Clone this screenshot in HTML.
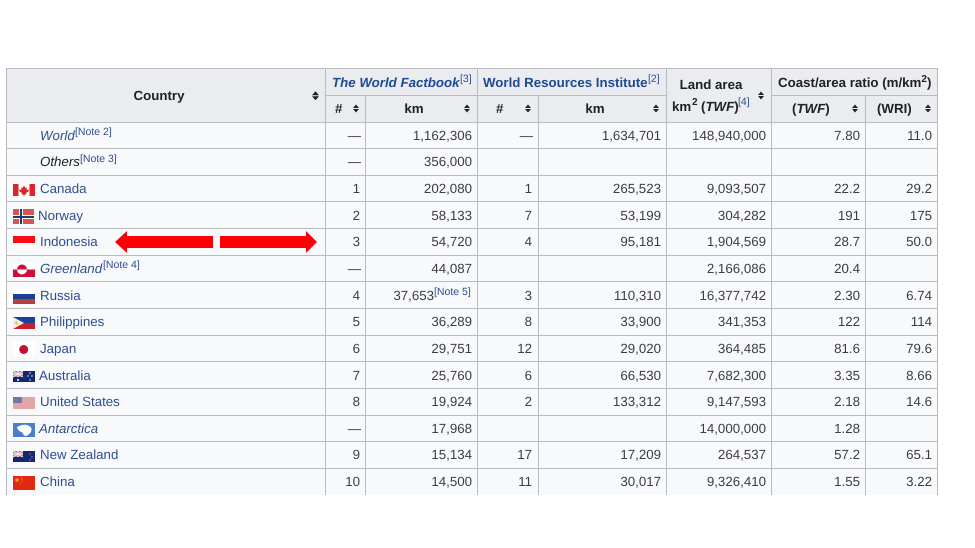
<!DOCTYPE html>
<html><head><meta charset="utf-8"><style>
html,body{margin:0;padding:0;background:#fff;width:975px;height:548px;overflow:hidden}
svg{display:block;font-family:"Liberation Sans",Arial,sans-serif;font-size:13.3px;text-rendering:geometricPrecision}
.txt{filter:blur(.25px)}
.n{fill:#3c3d3f;text-anchor:end}
.l{fill:#2f4f8f}
.h{fill:#202122;font-weight:bold}
.s{fill:#2f4f8f;font-size:10.5px}
.e{fill:#202122;font-style:italic}
.c{text-anchor:middle}
.g line{stroke:#b9bbbf;stroke-width:1;shape-rendering:crispEdges}
</style></head><body>
<svg width="975" height="548" viewBox="0 0 975 548" xmlns="http://www.w3.org/2000/svg">
<rect x="6" y="69" width="931" height="426" fill="#f8f9fa"/>
<rect x="6" y="69" width="931" height="53" fill="#eaecf0"/>
<g class="g">
<line x1="6" y1="68.5" x2="938" y2="68.5"/>
<line x1="325" y1="95.5" x2="666" y2="95.5"/>
<line x1="771" y1="95.5" x2="938" y2="95.5"/>
<line x1="6" y1="122.5" x2="938" y2="122.5"/>
<line x1="6" y1="148.5" x2="938" y2="148.5"/>
<line x1="6" y1="175.5" x2="938" y2="175.5"/>
<line x1="6" y1="201.5" x2="938" y2="201.5"/>
<line x1="6" y1="228.5" x2="938" y2="228.5"/>
<line x1="6" y1="255.5" x2="938" y2="255.5"/>
<line x1="6" y1="281.5" x2="938" y2="281.5"/>
<line x1="6" y1="308.5" x2="938" y2="308.5"/>
<line x1="6" y1="335.5" x2="938" y2="335.5"/>
<line x1="6" y1="361.5" x2="938" y2="361.5"/>
<line x1="6" y1="388.5" x2="938" y2="388.5"/>
<line x1="6" y1="415.5" x2="938" y2="415.5"/>
<line x1="6" y1="441.5" x2="938" y2="441.5"/>
<line x1="6" y1="468.5" x2="938" y2="468.5"/>
<line x1="6.5" y1="68" x2="6.5" y2="495"/>
<line x1="325.5" y1="68" x2="325.5" y2="495"/>
<line x1="365.5" y1="96" x2="365.5" y2="495"/>
<line x1="477.5" y1="68" x2="477.5" y2="495"/>
<line x1="538.5" y1="96" x2="538.5" y2="495"/>
<line x1="666.5" y1="68" x2="666.5" y2="495"/>
<line x1="771.5" y1="68" x2="771.5" y2="495"/>
<line x1="865.5" y1="96" x2="865.5" y2="495"/>
<line x1="937.5" y1="68" x2="937.5" y2="495"/>
</g>

<g class="txt">
<!-- header -->
<text class="h c" x="159" y="100">Country</text>
<text x="332" y="87" style="font-weight:bold;font-style:italic;fill:#1f4a94">The World Factbook</text><text class="s" x="460" y="82">[3]</text>
<text x="483" y="87" style="font-weight:bold;fill:#1f4a94">World Resources Institute</text><text class="s" x="648" y="82">[2]</text>
<text class="h c" x="711" y="89">Land area</text>
<text class="h" x="672" y="111">km</text><text class="h" x="692" y="105" style="font-size:10px">2</text><text class="h" x="701" y="111">(<tspan font-style="italic">TWF</tspan>)</text><text class="s" x="738" y="105">[4]</text>
<text class="h" x="778" y="87">Coast/area ratio (m/km<tspan dy="-5" font-size="10">2</tspan><tspan dy="5">)</tspan></text>
<text class="h" x="335" y="113">#</text>
<text class="h c" x="414" y="113">km</text>
<text class="h" x="496" y="113">#</text>
<text class="h c" x="595" y="113">km</text>
<text class="h" x="792" y="113">(<tspan font-style="italic">TWF</tspan>)</text>
<text class="h" x="877" y="113">(WRI)</text>

<!-- country names -->
<text x="40" y="140" class="l" font-style="italic">World</text><text class="s" x="75" y="135">[Note 2]</text>
<text x="40" y="166" class="e">Others</text><text class="s" x="80" y="162">[Note 3]</text>
<text x="40" y="193" class="l">Canada</text>
<text x="38" y="220" class="l">Norway</text>
<text x="40" y="246" class="l">Indonesia</text>
<text x="40" y="273" class="l" font-style="italic">Greenland</text><text class="s" x="103" y="268">[Note 4]</text>
<text x="40" y="300" class="l">Russia</text>
<text x="40" y="326" class="l">Philippines</text>
<text x="40" y="353" class="l">Japan</text>
<text x="39" y="380" class="l">Australia</text>
<text x="40" y="406" class="l">United States</text>
<text x="39" y="433" class="l" font-style="italic">Antarctica</text>
<text x="40" y="459" class="l">New Zealand</text>
<text x="40" y="486" class="l">China</text>

<!-- # WF -->
<text class="n" x="361" y="140">—</text>
<text class="n" x="361" y="166">—</text>
<text class="n" x="360" y="193">1</text>
<text class="n" x="360" y="220">2</text>
<text class="n" x="360" y="246">3</text>
<text class="n" x="361" y="273">—</text>
<text class="n" x="360" y="300">4</text>
<text class="n" x="360" y="326">5</text>
<text class="n" x="360" y="353">6</text>
<text class="n" x="360" y="380">7</text>
<text class="n" x="360" y="406">8</text>
<text class="n" x="361" y="433">—</text>
<text class="n" x="360" y="459">9</text>
<text class="n" x="360" y="486">10</text>
<!-- km WF -->
<text class="n" x="472" y="140">1,162,306</text>
<text class="n" x="472" y="166">356,000</text>
<text class="n" x="472" y="193">202,080</text>
<text class="n" x="472" y="220">58,133</text>
<text class="n" x="472" y="246">54,720</text>
<text class="n" x="472" y="273">44,087</text>
<text class="n" x="434" y="300">37,653</text><text class="s" x="434" y="295">[Note 5]</text>
<text class="n" x="472" y="326">36,289</text>
<text class="n" x="472" y="353">29,751</text>
<text class="n" x="472" y="380">25,760</text>
<text class="n" x="472" y="406">19,924</text>
<text class="n" x="472" y="433">17,968</text>
<text class="n" x="472" y="459">15,134</text>
<text class="n" x="472" y="486">14,500</text>
<!-- # WRI -->
<text class="n" x="533" y="140">—</text>
<text class="n" x="532" y="193">1</text>
<text class="n" x="532" y="220">7</text>
<text class="n" x="532" y="246">4</text>
<text class="n" x="532" y="300">3</text>
<text class="n" x="532" y="326">8</text>
<text class="n" x="532" y="353">12</text>
<text class="n" x="532" y="380">6</text>
<text class="n" x="532" y="406">2</text>
<text class="n" x="532" y="459">17</text>
<text class="n" x="532" y="486">11</text>
<!-- km WRI -->
<text class="n" x="661" y="140">1,634,701</text>
<text class="n" x="661" y="193">265,523</text>
<text class="n" x="661" y="220">53,199</text>
<text class="n" x="661" y="246">95,181</text>
<text class="n" x="661" y="300">110,310</text>
<text class="n" x="661" y="326">33,900</text>
<text class="n" x="661" y="353">29,020</text>
<text class="n" x="661" y="380">66,530</text>
<text class="n" x="661" y="406">133,312</text>
<text class="n" x="661" y="459">17,209</text>
<text class="n" x="661" y="486">30,017</text>
<!-- land -->
<text class="n" x="766" y="140">148,940,000</text>
<text class="n" x="766" y="193">9,093,507</text>
<text class="n" x="766" y="220">304,282</text>
<text class="n" x="766" y="246">1,904,569</text>
<text class="n" x="766" y="273">2,166,086</text>
<text class="n" x="766" y="300">16,377,742</text>
<text class="n" x="766" y="326">341,353</text>
<text class="n" x="766" y="353">364,485</text>
<text class="n" x="766" y="380">7,682,300</text>
<text class="n" x="766" y="406">9,147,593</text>
<text class="n" x="766" y="433">14,000,000</text>
<text class="n" x="766" y="459">264,537</text>
<text class="n" x="766" y="486">9,326,410</text>
<!-- TWF -->
<text class="n" x="860" y="140">7.80</text>
<text class="n" x="860" y="193">22.2</text>
<text class="n" x="860" y="220">191</text>
<text class="n" x="860" y="246">28.7</text>
<text class="n" x="860" y="273">20.4</text>
<text class="n" x="860" y="300">2.30</text>
<text class="n" x="860" y="326">122</text>
<text class="n" x="860" y="353">81.6</text>
<text class="n" x="860" y="380">3.35</text>
<text class="n" x="860" y="406">2.18</text>
<text class="n" x="860" y="433">1.28</text>
<text class="n" x="860" y="459">57.2</text>
<text class="n" x="860" y="486">1.55</text>
<!-- WRI -->
<text class="n" x="932" y="140">11.0</text>
<text class="n" x="932" y="193">29.2</text>
<text class="n" x="932" y="220">175</text>
<text class="n" x="932" y="246">50.0</text>
<text class="n" x="932" y="300">6.74</text>
<text class="n" x="932" y="326">114</text>
<text class="n" x="932" y="353">79.6</text>
<text class="n" x="932" y="380">8.66</text>
<text class="n" x="932" y="406">14.6</text>
<text class="n" x="932" y="459">65.1</text>
<text class="n" x="932" y="486">3.22</text>
</g>

<!-- sort arrows -->
<g fill="#202122">
<path d="M312 95.3l3.5-4 3.5 4zM312 96.3l3.5 4 3.5-4z"/>
<path d="M353 108l3-3.500 3 3.500zM353 109l3 3.500 3-3.500z"/>
<path d="M464 108l3-3.500 3 3.500zM464 109l3 3.500 3-3.500z"/>
<path d="M525 108l3-3.500 3 3.500zM525 109l3 3.500 3-3.500z"/>
<path d="M653 108l3-3.500 3 3.500zM653 109l3 3.500 3-3.500z"/>
<path d="M758 95l3-3.500 3 3.500zM758 96l3 3.500 3-3.500z"/>
<path d="M852 108l3-3.500 3 3.500zM852 109l3 3.500 3-3.500z"/>
<path d="M925 108l3-3.500 3 3.500zM925 109l3 3.500 3-3.500z"/>
</g>

<!-- flags -->
<!-- Canada -->
<rect x="13" y="184" width="22" height="12" fill="#fff"/><rect x="13" y="184" width="5.5" height="12" fill="#d5282e"/><rect x="29.5" y="184" width="5.5" height="12" fill="#d5282e"/><path d="M24 185.5l1.500 2.500 1.500-.5-.5 2.500 2.500-.5-.5 2-2.500 1.500 .2 1.500h-1.700v1.500h-1v-1.500h-1.700l.2-1.500-2.500-1.500-.5-2 2.500 .5-.5-2.500 1.500 .5z" fill="#d5282e"/>
<!-- Norway -->
<rect x="13" y="209" width="21" height="15" fill="#d9534f"/><rect x="19" y="209" width="4" height="15" fill="#fff"/><rect x="13" y="215" width="21" height="4" fill="#fff"/><rect x="20" y="209" width="2" height="15" fill="#1f3a6e"/><rect x="13" y="216" width="21" height="2" fill="#1f3a6e"/>
<!-- Indonesia -->
<rect x="13" y="236" width="22" height="7" fill="#f80d12"/><rect x="13" y="243" width="22" height="7" fill="#fbfbfb"/>
<!-- Greenland -->
<rect x="13" y="263" width="22" height="6.5" fill="#fff"/><rect x="13" y="269.5" width="22" height="7.500" fill="#d0103a"/><path d="M17 269.500a5 5 0 0 1 10 0z" fill="#d0103a"/><path d="M17 269.500h10a5 5 0 0 1-10 0z" fill="#fff"/>
<!-- Russia -->
<rect x="13" y="289" width="22" height="5" fill="#fff"/><rect x="13" y="294" width="22" height="5" fill="#1c3f94"/><rect x="13" y="299" width="22" height="5" fill="#b5413f"/>
<!-- Philippines -->
<rect x="13" y="317" width="22" height="6" fill="#1b3f9c"/><rect x="13" y="323" width="22" height="6" fill="#c8202f"/><path d="M13 317l11 6-11 6z" fill="#f3efe0"/><circle cx="16.5" cy="323" r="1.5" fill="#f0c040"/>
<!-- Japan -->
<rect x="13" y="342" width="22" height="15" fill="#fff"/><circle cx="23.7" cy="349.5" r="4.5" fill="#c4102e"/>
<!-- Australia -->
<rect x="13" y="371" width="22" height="11" fill="#12296f"/><rect x="13" y="371" width="10" height="6" fill="#b57a90"/><path d="M13 371l10 6M23 371l-10 6" stroke="#eee" stroke-width="1"/><path d="M18 371v6M13 374h10" stroke="#f0e8ee" stroke-width="1.200"/><g fill="#fff"><circle cx="18" cy="380" r="1"/><circle cx="30" cy="373" r=".7"/><circle cx="32" cy="376" r=".7"/><circle cx="28" cy="376" r=".7"/><circle cx="30" cy="380" r=".7"/></g>
<!-- US -->
<rect x="13" y="397" width="22" height="12" fill="#eec3c3"/><path d="M13 398h22M13 400h22M13 402h22M13 404h22M13 406h22M13 408h22" stroke="#d88a8e" stroke-width="1"/><rect x="13" y="397" width="9" height="6" fill="#6f7aa0"/>
<!-- Antarctica -->
<rect x="13" y="423" width="22" height="14" fill="#4a80c8"/><path d="M17 427c4-2 8-3 11-1.500 2 .5 4 2.500 3.500 4.500-.5 3-3 5-5.500 6-2 0-3-2-3.500-3.500-2-.5-5-2.500-5.500-5.500z" fill="#fff"/>
<!-- New Zealand -->
<rect x="13" y="451" width="22" height="11" fill="#12296f"/><rect x="13" y="451" width="10" height="6" fill="#b57a90"/><path d="M13 451l10 6M23 451l-10 6" stroke="#eee" stroke-width="1"/><path d="M18 451v6M13 454h10" stroke="#f0e8ee" stroke-width="1.200"/><g fill="#d86a70"><circle cx="30" cy="454" r=".8"/><circle cx="32" cy="457" r=".8"/><circle cx="30" cy="460" r=".8"/></g>
<!-- China -->
<rect x="13" y="476" width="22" height="14" fill="#dd2a10"/><circle cx="17" cy="480" r="1.600" fill="#f0b020"/><g fill="#f0b020"><circle cx="21" cy="477.500" r=".5"/><circle cx="22" cy="479.500" r=".5"/><circle cx="22" cy="481.500" r=".5"/><circle cx="20.5" cy="483.500" r=".5"/></g>

<!-- red arrows -->
<path d="M115 242l12-11v5h86v12h-86v5z" fill="#fb0007"/>
<path d="M220 236h86v-5l11 11-11 11v-5h-86z" fill="#fb0007"/>
</svg>
</body></html>
